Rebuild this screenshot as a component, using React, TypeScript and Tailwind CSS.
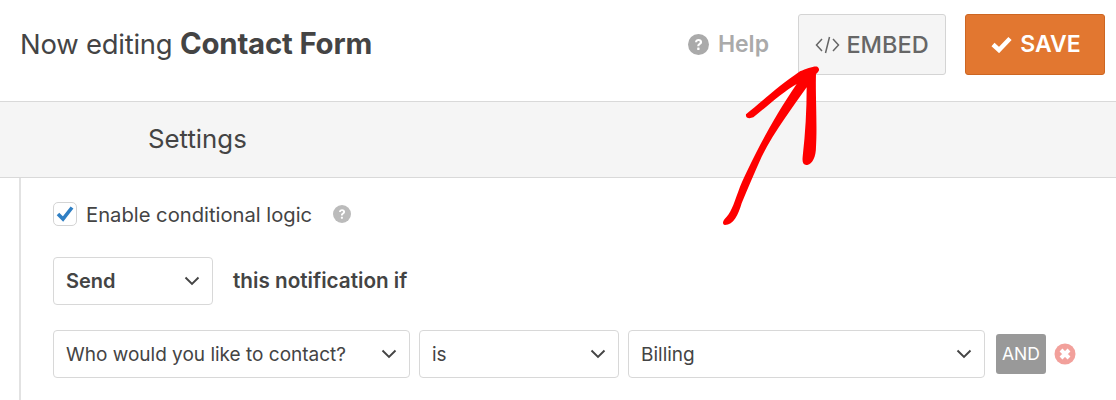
import React from "react";

const F = { fontFamily: "Inter, 'Liberation Sans', sans-serif" };

function Chevron({ className = "" }: { className?: string }) {
  return (
    <svg width="16" height="10" viewBox="0 0 16 10" className={className} fill="none">
      <path d="M1.5 1.5 L8 8 L14.5 1.5" stroke="#444" strokeWidth="1.9" />
    </svg>
  );
}

function Select({ w, label, bold }: { w: string; label: string; bold?: boolean }) {
  return (
    <div className={`${w} h-12 shrink-0 flex items-center justify-between pl-3 pr-3 bg-white border border-[#d8d8d8] rounded-[4px] text-[#444] ${bold ? "font-semibold text-[20px]" : "text-[19px]"}`}>
      <span className={`whitespace-nowrap ${bold ? "" : "pt-[3px]"}`}>{label}</span>
      <Chevron />
    </div>
  );
}

function QuestionCircle({ size, color }: { size: number; color: string }) {
  return (
    <svg width={size} height={size} viewBox="0 0 24 24">
      <circle cx="12" cy="12" r="12" fill={color} />
      <path d="M8 9.4c.2-2.4 1.9-3.7 4.1-3.7 2.300 0 4 1.400 4 3.400 0 1.600-.9 2.400-2 3.100-.8.500-1 .8-1 1.700h-2.500c0-1.700.5-2.400 1.600-3.100.9-.6 1.300-1 1.300-1.600 0-.8-.6-1.300-1.500-1.300-1 0-1.500.6-1.600 1.500z" fill="#fff" />
      <rect x="10.500" y="15.500" width="2.700" height="2.700" rx=".4" fill="#fff" />
    </svg>
  );
}

export default function App() {
  return (
    <div style={F} className="relative w-[1116px] h-[400px] overflow-hidden bg-white">
      <header className="h-[101px] flex items-start justify-between pl-5 pr-[11px] pt-[14px]">
        <h1 className="text-[27.400px] leading-[60px] text-[#444] tracking-[-0.2px] font-normal whitespace-nowrap">
          Now editing <b className="font-bold text-[29.400px]">Contact Form</b>
        </h1>
        <div className="flex items-center">
          <div className="flex items-center gap-[9px] text-[23px] font-semibold text-[#aaa] mr-[29px]">
            <QuestionCircle size={21} color="#aaa" />
            <span>Help</span>
          </div>
          <div className="w-[148px] h-[61px] flex items-center justify-center gap-[6px] bg-[#f5f5f5] border border-[#d4d4d4] rounded-[3px] text-[23.500px] font-medium text-[#666] mr-[19px]">
            <svg width="25" height="20" viewBox="0 0 25 20" fill="none" stroke="#666" strokeWidth="1.500">
              <path d="M7 4 L1.500 10 L7 16 M18 4 L23.500 10 L18 16 M14.500 2 L10.500 18" />
            </svg>
            <span>EMBED</span>
          </div>
          <div className="w-[140px] h-[61px] flex items-center justify-center gap-[8px] pl-[2px] bg-[#e27730] border border-[#cd6622] rounded-[3px] text-[23px] font-semibold text-white">
            <svg width="21" height="17" viewBox="0 0 21 17" fill="none" stroke="#fff" strokeWidth="4.500">
              <path d="M2 8.500 L8 14 L19 2.500" />
            </svg>
            <span>SAVE</span>
          </div>
        </div>
      </header>

      <div className="h-[77px] bg-[#f5f5f5] border-y border-[#d9d9d9] flex items-center pl-[148px] text-[25.800px] text-[#444]">
        Settings
      </div>

      <div className="ml-[19px] h-[222px] border-l-2 border-[#e2e2e2] pl-[32px]">
        <div className="flex items-center pt-[24px] h-[48px]">
          <div className="relative w-6 h-6 bg-white border border-[#d4d4d4] rounded-[5px] flex items-center justify-center">
            <svg width="18" height="16" viewBox="0 0 18 16" fill="none" stroke="#2f7fc4" strokeWidth="3.600">
              <path d="M2 8 L7 13 L16 1.500" />
            </svg>
          </div>
          <span className="ml-[9px] pt-[2px] text-[20.200px] text-[#444] whitespace-nowrap">Enable conditional logic</span>
          <span className="ml-[21px] flex"><QuestionCircle size={18} color="#bbb" /></span>
        </div>
        <div className="flex items-center mt-[31px]">
          <Select w="w-[160px]" label="Send" bold />
          <span className="ml-[20px] text-[20.700px] font-semibold text-[#444] whitespace-nowrap">this notification if</span>
        </div>
        <div className="flex items-center mt-[25px]">
          <Select w="w-[357px]" label="Who would you like to contact?" />
          <div className="w-[9px] shrink-0" />
          <Select w="w-[200px]" label="is" />
          <div className="w-[9px] shrink-0" />
          <Select w="w-[357px]" label="Billing" />
          <div className="ml-[11px] w-[50px] h-10 flex items-center justify-center bg-[#999] rounded-[3px] text-[17.500px] text-white">AND</div>
          <svg className="ml-[8px]" width="22" height="22" viewBox="0 0 22 22">
            <circle cx="11" cy="11" r="10.500" fill="#f2a09b" />
            <path d="M7 7 L15 15 M15 7 L7 15" stroke="#fff" strokeWidth="4" />
          </svg>
        </div>
      </div>

      <svg className="absolute left-[660px] top-0 pointer-events-none" width="456" height="240" viewBox="0 0 1368 720">
        <path
          fill="#fe0000"
          d="M258 343 C300 310 350 262 420 214 C440 206 460 198 472 200 C482 208 476 216 468 222 C466 280 472 380 468 440 C468 470 458 490 442 495 C430 497 426 488 428 470 C436 400 440 330 440 262 C400 320 345 390 305 470 C285 515 265 560 245 610 C235 645 220 675 195 675 C185 672 188 662 200 650 C215 635 225 600 240 560 C275 480 330 370 410 252 C370 275 320 320 280 352 C265 358 256 352 258 343 Z"
        />
      </svg>
    </div>
  );
}
